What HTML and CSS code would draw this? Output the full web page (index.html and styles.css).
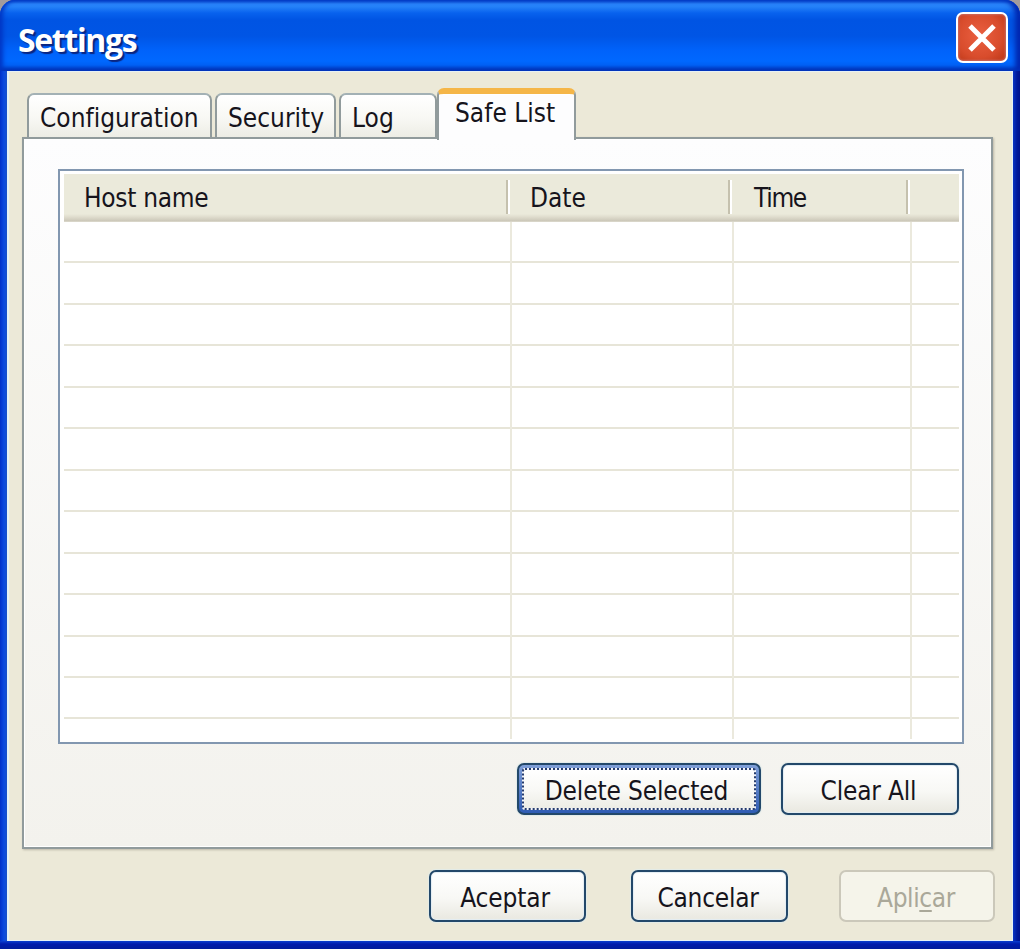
FILE: index.html
```html
<!DOCTYPE html>
<html lang="es">
<head>
<meta charset="utf-8">
<title>Settings</title>
<link rel="stylesheet" href="styles.css">
</head>
<body>
<div class="desktop">
<main class="window">
  <header class="titlebar">
    <h1 class="title">Settings</h1>
    <button class="close" aria-label="Close">
      <svg class="close-icon" viewBox="0 0 30 30"><path d="M3 3L27 27M27 3L3 27"/></svg>
    </button>
  </header>
  <div class="client">
    <nav class="tabs">
      <button class="tab tab-config">Configuration</button>
      <button class="tab tab-security">Security</button>
      <button class="tab tab-log">Log</button>
      <button class="tab tab-active">Safe List</button>
    </nav>
    <section class="panel">
      <div class="list">
        <div class="list-head">
          <span class="head-cell head-host">Host name</span>
          <span class="head-cell head-date">Date</span>
          <span class="head-cell head-time">Time</span>
          <span class="head-cell"></span>
        </div>
        <div class="list-body">
          <div class="col"></div>
          <div class="col"></div>
          <div class="col"></div>
          <div class="col"></div>
        </div>
      </div>
      <div class="panel-actions">
        <button class="btn btn-delete"><span class="focus"><span class="label">Delete Selected</span></span></button>
        <button class="btn btn-clear"><span class="label">Clear All</span></button>
      </div>
    </section>
    <footer class="actions">
      <button class="btn btn-ok"><span class="label">Aceptar</span></button>
      <button class="btn btn-cancel"><span class="label">Cancelar</span></button>
      <button class="btn btn-disabled" disabled><span class="label">Apli<span class="key">c</span>ar</span></button>
    </footer>
  </div>
</main>
</div>
</body>
</html>
```

FILE: styles.css
```css
* { box-sizing: border-box; }

body {
  margin: 0;
  font: 26px/32px "DejaVu Sans Condensed", "DejaVu Sans", sans-serif;
  font-stretch: condensed;
  color: #16141c;
}

button {
  margin: 0;
  padding: 0;
  border: 0;
  font: inherit;
  font-stretch: condensed;
  color: inherit;
  white-space: nowrap;
}

.desktop {
  width: 1020px;
  height: 949px;
  background: #a29c9c;
}

.window {
  display: flex;
  flex-direction: column;
  height: 949px;
  padding: 0 7px 8px;
  border-radius: 15px 15px 0 0;
  background:
    linear-gradient(#0a3fd0, #001cac 3px, #001c9c) bottom / 100% 8px no-repeat,
    linear-gradient(90deg, #0030c8, #0a4ae0 4px, #1850c8 7px) left / 7px 100% no-repeat,
    linear-gradient(90deg, #0a35c4, #001a9c 4px, #00128c) right / 7px 100% no-repeat,
    #0831d9;
}

.titlebar {
  display: flex;
  align-items: center;
  justify-content: space-between;
  flex: none;
  height: 71px;
  margin: 0 -7px;
  padding: 4px 12px 0 18px;
  border-radius: 15px 15px 0 0;
  background: linear-gradient(#0a55dc 0, #2a86fb 4px, #2380f8 7px, #0862ee 13px, #0054e3 20px, #0055e5 36px, #0062fa 50px, #0068ff 61px, #0060f4 65px, #0043c8 69px, #0a3db5 71px);
  box-shadow: inset 3px 0 4px #0036c4, inset -5px 0 5px #0028b0;
}

.title {
  margin: 4px 0 0;
  font: bold 32px/44px "Open Sans", "Noto Sans", sans-serif;
  letter-spacing: -1.350px;
  color: #fff;
  text-shadow: 2px 2px 1px #0a2580;
}

.close {
  display: grid;
  place-items: center;
  width: 52px;
  height: 51px;
  border: 2px solid #fff;
  border-radius: 7px;
  background: radial-gradient(circle at 45% 45%, #ea5f40, #d84c2c 60%, #b93414);
  box-shadow: inset 0 0 2px 1px #c86a62;
}

.close-icon { width: 30px; height: 30px; }

.close-icon path {
  fill: none;
  stroke: #fff;
  stroke-width: 5;
}

.client {
  flex: 1;
  padding: 16px 18px 0 15px;
  background: #ece9d8;
  box-shadow: inset 2px 1px 0 #e6f1f5, inset -1px -1px 0 #e6f1f5;
}

.tabs {
  display: flex;
  align-items: flex-end;
  height: 50px;
  padding-left: 5px;
}

.tab {
  height: 44px;
  margin-right: 3px;
  padding: 4px 0 0 11px;
  border: 2px solid #919b9c;
  border-color: #a3b1b5 #919b9c #919b9c;
  border-bottom: 0;
  border-radius: 7px 7px 0 0;
  background: linear-gradient(#fff, #f8f8f4 55%, #ededE5);
  text-align: left;
}

.tab-config { width: 185px; }
.tab-security { width: 121px; }
.tab-log { width: 98px; margin-right: 0; }

.tab-active {
  position: relative;
  z-index: 1;
  align-self: flex-start;
  width: 139px;
  height: 52px;
  margin: 1px 0 0;
  padding: 0 0 8px 16px;
  border-top: 6px solid #f5b648;
  background: #fdfdfe;
  box-shadow: inset 0 1px 0 #fff;
}

.panel {
  width: 971px;
  height: 712px;
  padding: 30px 27px 0 34px;
  border: 2px solid #919b9c;
  background: linear-gradient(#fdfdfe, #f3f2ed);
  box-shadow: inset 0 0 0 1px #fff, 1px 1px 2px #bcb8a8;
}

.list {
  width: 906px;
  height: 575px;
  padding: 3px 3px 3px 4px;
  border: 2px solid #8297b0;
  background: #fff;
}

.list-head, .list-body {
  display: grid;
  grid-template-columns: 448px 222px 178px 1fr;
}

.list-head {
  height: 48px;
  padding: 6px 0 0;
  background: linear-gradient(#ebeadb 0, #ebeadb 40px, #dfdccd 43px, #cbc7b8 47px, #e5e3d8 48px);
}

.head-cell {
  height: 34px;
  margin-right: 2px;
  padding: 2px 0 0 20px;
  border-right: 2px solid #fff;
  box-shadow: inset -2px 0 0 #c5c1ae;
}

.head-host { letter-spacing: -0.300px; }
.head-date { padding-left: 18px; }
.head-time { letter-spacing: -1.300px; }

.head-cell:last-child {
  border: 0;
  box-shadow: none;
}

.list-body {
  height: 517px;
  background: repeating-linear-gradient(transparent 0, transparent 39.450px, #e7e5d8 39.450px, #e7e5d8 41.450px);
}

.col { border-right: 2px solid #ebe9dd; }
.col:last-child { border: 0; }

.panel-actions {
  display: flex;
  justify-content: flex-end;
  gap: 20px;
  padding: 19px 5px 0 0;
}

.actions {
  display: flex;
  justify-content: flex-end;
  gap: 45px;
  padding-top: 21px;
}

.btn {
  width: 157px;
  height: 52px;
  border: 2px solid #23486a;
  border-radius: 7px;
  background: linear-gradient(#fff, #f8f8f5 55%, #e9e8e0);
  box-shadow: inset 0 0 1px 1px #e3edf3, 0 0 1px 1px #e3ece9;
}

.btn-ok, .btn-cancel { padding-right: 5px; }
.btn-ok { letter-spacing: -0.150px; }
.btn-cancel { padding-right: 3px; letter-spacing: -0.250px; }

.actions .btn-disabled {
  width: 156px;
  margin-left: 6px;
  padding-right: 2px;
  border-color: #cbc8ba;
  background: #f5f4ea;
  box-shadow: none;
  color: #aaa899;
  letter-spacing: -0.400px;
}

.btn-clear {
  width: 178px;
  padding-right: 3px;
  letter-spacing: -0.200px;
}

.btn-delete {
  width: 244px;
  padding: 3px;
  background: linear-gradient(#7f9fd8, #2f5cb4);
  box-shadow: 0 0 1px 1px #e3ece9;
  letter-spacing: -0.150px;
}

.focus {
  display: grid;
  place-items: center;
  height: 42px;
  padding-right: 5px;
  border: 2px dotted #253b6c;
  border-radius: 3px;
  background: linear-gradient(#fff, #f8f8f5 55%, #ededE6) padding-box, linear-gradient(#f4f6fa, #f4f6fa) border-box;
}

.label {
  position: relative;
  top: 2px;
}

.key {
  text-decoration: underline;
  text-decoration-thickness: 2px;
  text-underline-offset: 3px;
}
```
